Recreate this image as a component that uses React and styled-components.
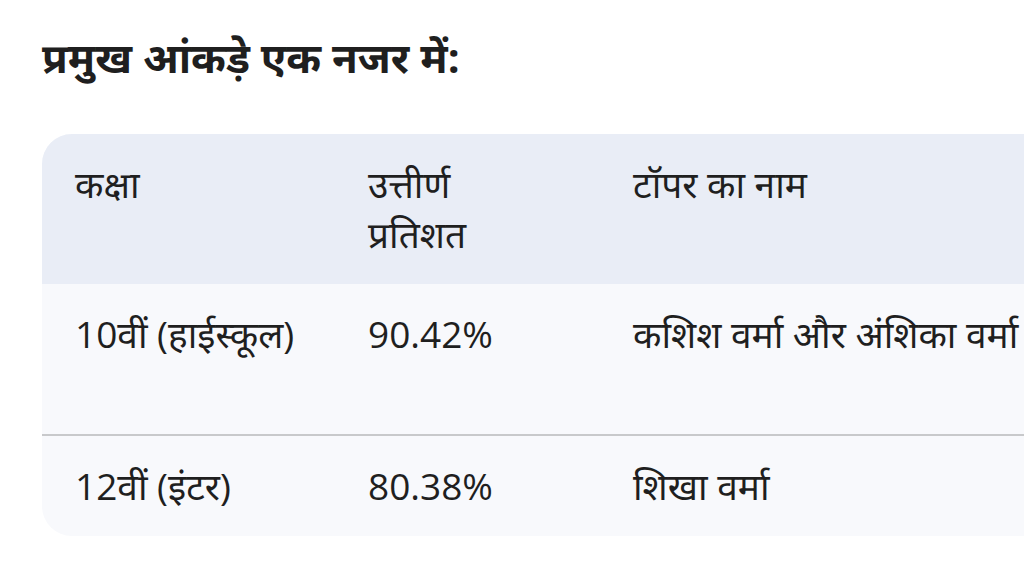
import React from "react";
import styled, { createGlobalStyle } from "styled-components";

const rows = [
  { cls: "10वीं (हाईस्कूल)", pass: "90.42%", topper: "कशिश वर्मा और अंशिका वर्मा", tall: true },
  { cls: "12वीं (इंटर)", pass: "80.38%", topper: "शिखा वर्मा" },
];

export default function App() {
  return (
    <>
      <GlobalStyle />
      <Page>
        <Heading>प्रमुख आंकड़े एक नजर में:</Heading>
        <TableWrap>
          <Table>
            <thead>
              <tr>
                <Th $w={293}>कक्षा</Th>
                <Th $w={265}>उत्तीर्ण<br />प्रतिशत</Th>
                <Th $w={542}>टॉपर का नाम</Th>
              </tr>
            </thead>
            <tbody>
              {rows.map((r) => (
                <Row key={r.cls}>
                  <Td $tall={r.tall}>{r.cls}</Td>
                  <Td $tall={r.tall}>{r.pass}</Td>
                  <Td $tall={r.tall}>{r.topper}</Td>
                </Row>
              ))}
            </tbody>
          </Table>
        </TableWrap>
      </Page>
    </>
  );
}

const GlobalStyle = createGlobalStyle`
  body {
    margin: 0;
    background: #ffffff;
    color: #1f1f1f;
    font-family: "Open Sans", "Noto Sans", "Noto Sans Devanagari", sans-serif;
  }
`;

const Page = styled.div`
  padding: 18px 0 0 42px;
  overflow: hidden;
`;

const Heading = styled.h2`
  margin: 0 0 38px;
  font-size: 42px;
  font-weight: 700;
  line-height: 78px;
  color: #1f1f1f;
`;

const TableWrap = styled.div`
  width: 1100px;
  border-radius: 30px 0 0 30px;
  overflow: hidden;
  background: #f8f9fc;
`;

const Table = styled.table`
  border-collapse: collapse;
  width: 100%;
  table-layout: fixed;
  font-size: 37px;
  line-height: 50px;
`;

const Th = styled.th`
  box-sizing: border-box;
  width: ${(p) => p.$w}px;
  background: #e9edf6;
  text-align: left;
  font-weight: 400;
  vertical-align: top;
  padding: 25px 33px;
`;

const Row = styled.tr`
  & + & {
    border-top: 2px solid #c8c9cb;
  }
`;

const Td = styled.td`
  box-sizing: border-box;
  vertical-align: top;
  padding: 25px 33px ${(p) => (p.$tall ? 75 : 25)}px;
  white-space: nowrap;
`;
